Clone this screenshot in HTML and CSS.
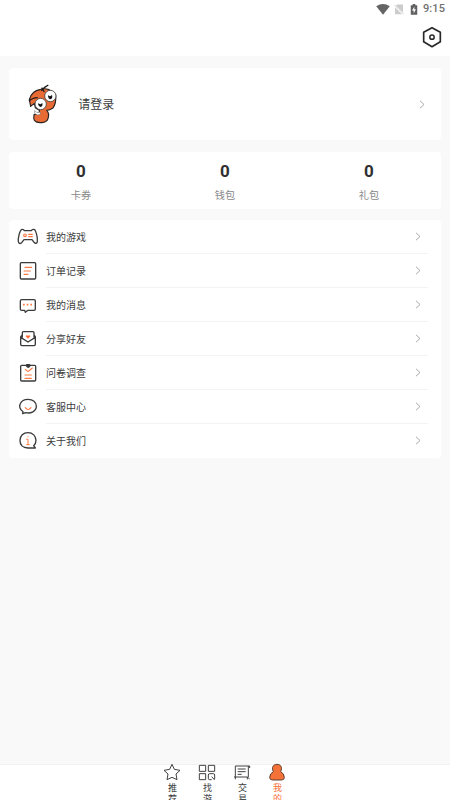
FILE: index.html
```html
<!DOCTYPE html>
<html lang="zh-CN">
<head>
<meta charset="utf-8">
<title>我的</title>
<link rel="stylesheet" href="styles.css">
</head>
<body>
<div class="app">
  <header class="header">
    <div class="status">
      <svg class="wifi" viewBox="0 0 42 34"><path d="M0 7Q21-7 42 7L21 33Z" fill="#656565"/></svg>
      <svg class="sim" viewBox="0 0 30 32"><path d="M10 1H27V25L6 5ZM3 9L24 30H3Z" fill="#ccc"/><path d="M1 2L29 30" stroke="#bbb" stroke-width="2"/></svg>
      <svg class="battery" viewBox="0 0 22 34"><path d="M1 4H7V0H15V4H21V33H1Z" fill="#606060"/><path d="M12 8L5 20H10V29L17 16H12Z" fill="#fff"/></svg>
      <span class="time">9:15</span>
    </div>
    <svg class="settings" viewBox="186 78 60 66" fill="none" stroke="#292929"><path d="M216 83L241 97V125L216 140L191 125V97Z" stroke-width="5" stroke-linejoin="round"/><circle cx="216" cy="111.500" r="6.500" stroke-width="4.500"/></svg>
  </header>
  <main class="content">
    <section class="card login">
      <svg class="avatar" viewBox="80 72 92 120">
        <path d="M87 119C91 101 103 91 121 88Q133 84 146 89L166 105Q168 130 158 144Q148 151 139 151Q148 159 143 176C139 190 111 192 102 181Q99 176 101 164L113 162Q119 158 117 151L105 143L102 130L91 139Z" fill="#e86b35" stroke="#292321" stroke-width="3.500" stroke-linejoin="round"/>
        <circle cx="150" cy="108" r="17" fill="#fff" stroke="#443c39" stroke-width="2.500"/>
        <circle cx="121" cy="132" r="17" fill="#fff" stroke="#443c39" stroke-width="2.500"/>
        <path d="M103 151Q108 162 119 156L121 162Q110 169 103 160Z" fill="#fff" stroke="#625954" stroke-width="1.500"/>
        <path d="M143 106L149 109L155 105Q158 116 150 118Q143 117 143 106ZM113 130L120 133L126 129Q128 139 121 141Q114 140 113 130Z" fill="#141414"/>
        <path d="M86 123Q97 113 112 113M123 92L133 82L144 75M124 83L132 96" fill="none" stroke="#1d1b1a" stroke-width="4"/>
      </svg>
      <span class="login-text">请登录</span>
      <svg class="arrow" viewBox="0 0 6 9"><path d="M1 .8L5 4.500L1 8.200"/></svg>
    </section>
    <section class="card stats">
      <div class="stat"><b>0</b><span>卡券</span></div>
      <div class="stat"><b>0</b><span>钱包</span></div>
      <div class="stat"><b>0</b><span>礼包</span></div>
    </section>
    <section class="card menu">
      <div class="row">
        <svg class="icon" viewBox="48 30 72 72"><path d="M64 44Q70 41 73 47H94Q97 41 104 44C109 50 113 68 112 80Q109 89 102 82L96 74H72L65 83Q57 89 55 80C54 69 58 51 64 44Z"/><g class="accent"><circle cx="75" cy="61" r="4"/><path d="M86 58H97M86 65H97"/></g></svg>
        <div class="line"><span>我的游戏</span><svg class="arrow" viewBox="0 0 6 9"><path d="M1 .8L5 4.500L1 8.200"/></svg></div>
      </div>
      <div class="row">
        <svg class="icon" viewBox="48 132 72 72"><rect x="61" y="143" width="46" height="49" rx="3"/><path class="accent" d="M75 157H95M72 168H91M72 178H84"/></svg>
        <div class="line"><span>订单记录</span><svg class="arrow" viewBox="0 0 6 9"><path d="M1 .8L5 4.500L1 8.200"/></svg></div>
      </div>
      <div class="row">
        <svg class="icon" viewBox="48 15 72 72"><path d="M65 35H102Q106 35 106 39V63Q106 67 102 67H84L76 73L74 67H65Q61 67 61 63V39Q61 35 65 35Z"/><path class="accent dots" d="M69 50H74M80 50H85M91 50H96"/></svg>
        <div class="line"><span>我的消息</span><svg class="arrow" viewBox="0 0 6 9"><path d="M1 .8L5 4.500L1 8.200"/></svg></div>
      </div>
      <div class="row">
        <svg class="icon" viewBox="48 117 72 72"><path d="M67 147V134Q67 131 70 131H99Q102 131 102 134V147M67 141L62 146V169Q62 173 66 173H102Q106 173 106 169V146L102 141M62 148L84 162L106 148"/><path class="heart" d="M84 152L77 145Q79 139 84 143Q89 139 91 145Z"/></svg>
        <div class="line"><span>分享好友</span><svg class="arrow" viewBox="0 0 6 9"><path d="M1 .8L5 4.500L1 8.200"/></svg></div>
      </div>
      <div class="row">
        <svg class="icon" viewBox="48 15 72 72"><rect x="62" y="28" width="45" height="47" rx="3"/><path d="M80 26H89V31L84 34L80 31Z" fill="#333"/><path class="accent" d="M76 40L84 47L97 36M75 57H94M75 67H94"/></svg>
        <div class="line"><span>问卷调查</span><svg class="arrow" viewBox="0 0 6 9"><path d="M1 .8L5 4.500L1 8.200"/></svg></div>
      </div>
      <div class="row">
        <svg class="icon" viewBox="48 117 72 72"><path d="M68 173L69 167C50 153 61 130 84 130C99 130 109 139 109 151C109 166 92 174 77 170Z"/><path class="accent" d="M76 155Q84 166 93 155"/></svg>
        <div class="line"><span>客服中心</span><svg class="arrow" viewBox="0 0 6 9"><path d="M1 .8L5 4.500L1 8.200"/></svg></div>
      </div>
      <div class="row">
        <svg class="icon" viewBox="48 219 72 72"><path d="M106 276H84C69 276 60 267 60 253C60 239 70 230 84 230C98 230 108 240 108 253Q108 263 101 269Z"/><path class="accent info" d="M80 250H84V266M80 266H88M84 242V243"/></svg>
        <div class="line"><span>关于我们</span><svg class="arrow" viewBox="0 0 6 9"><path d="M1 .8L5 4.500L1 8.200"/></svg></div>
      </div>
    </section>
  </main>
  <nav class="tabs">
    <div class="tab"><svg viewBox="24 24 54 54"><path d="M51 28L58 43L75 46L63 57L66 74L51 67L36 74L39 57L27 46L44 43Z"/></svg><span>推荐</span></div>
    <div class="tab"><svg viewBox="129 24 54 54"><path d="M133 31H152V49H133ZM160 31H179V49H160ZM133 56H152V74H133ZM170 74H164Q160 74 160 70V60Q160 56 164 56H175Q179 56 179 60V72M170 65L179 75"/></svg><span>找游</span></div>
    <div class="tab"><svg viewBox="24 24 54 54"><path d="M31 66V33H74V39M70 33V66M27 66H67L74 72M31 66V73M67 66V73M38 42H62M38 50H62M38 58H50"/></svg><span>交易</span></div>
    <div class="tab active"><svg viewBox="129 24 54 54"><path d="M145 50C139 38 144 28 156 28C168 28 173 38 167 50Q178 55 178 68Q178 74 170 75H142Q134 74 134 68Q134 55 145 50Z"/></svg><span>我的</span></div>
  </nav>
</div>
</body>
</html>
```
FILE: styles.css
```css
* { box-sizing: border-box; }
body { margin: 0; background: #f9f9f9; color: #3c3c3c; font-family: "Noto Sans CJK SC", sans-serif; }
svg { display: block; flex: none; }
.app { height: 800px; display: flex; flex-direction: column; overflow: hidden; }
.header { height: 56px; background: #fff; flex: none; }
.status { height: 18px; display: flex; align-items: center; justify-content: flex-end; padding-right: 5px; }
.wifi { width: 14px; height: 11px; margin-right: 4px; }
.sim { width: 10px; height: 11px; margin-right: 6px; }
.battery { width: 8px; height: 11px; margin-right: 5px; }
.time { font: 500 11px/18px Roboto, sans-serif; color: #707070; width: 22px; white-space: nowrap; letter-spacing: .1px; }
.settings { width: 20px; height: 22px; margin: 8px 8px 0 auto; }
.content { flex: 1; padding: 12px 9px 0; }
.card { background: #fff; border-radius: 4px; }
.login { height: 72px; display: flex; align-items: center; padding: 0 16px 0 17.6px; }
.avatar { width: 30.7px; height: 40px; }
.login-text { font-size: 12px; line-height: 18px; margin-left: 21px; flex: 1; }
.arrow { width: 6px; height: 9px; fill: none; stroke: #aaa; stroke-width: 1; }
.stats { height: 57px; margin-top: 12px; display: flex; }
.stat { flex: 1; display: flex; flex-direction: column; align-items: center; padding-top: 9px; }
.stat b { font: 700 17px/20px Roboto, sans-serif; color: #303030; }
.stat span { font-size: 10.2px; line-height: 16px; color: #888; margin-top: 5.5px; }
.menu { margin-top: 11px; }
.row { height: 34px; display: flex; align-items: center; padding: 0 13px 0 7px; }
.icon { width: 24px; height: 24px; margin-right: 6px; fill: none; stroke: #3b3b3b; stroke-width: 4; stroke-linecap: round; stroke-linejoin: round; }
.accent { stroke: #ff7940; stroke-width: 3.5; }
.dots { stroke-width: 5; stroke-linecap: butt; }
.info { stroke-width: 3; }
.heart { fill: #ff6a30; stroke: none; }
.line { flex: 1; height: 34px; display: flex; align-items: center; justify-content: space-between; border-bottom: 1px solid #f3f3f3; padding-right: 7px; font-size: 10px; }
.row:last-child .line { border-color: transparent; }
.tabs { height: 36px; flex: none; border-top: 1px solid #f2f2f2; background: #fff; display: flex; justify-content: center; }
.tab { width: 35px; display: flex; flex-direction: column; align-items: center; }
.tab svg { width: 18px; height: 18px; margin: -2px 1px 0 0; fill: none; stroke: #333; stroke-width: 2.8; stroke-linejoin: round; }
.tab span { width: 9px; font-size: 9px; line-height: 10.5px; word-break: break-all; margin-top: 2px; }
.active { color: #fb7139; }
.tab.active svg { fill: #f47237; stroke: #51382c; }
```
